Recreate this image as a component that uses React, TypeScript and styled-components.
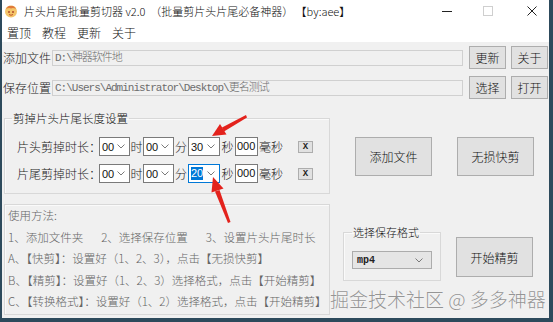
import { FC } from "react";
import styled, { createGlobalStyle } from "styled-components";

const FRAME = "#2d4a5c";

const GlobalStyle = createGlobalStyle`
  html, body { margin: 0; padding: 0; background: #f0f0f0; }
  body { font-family: "Noto Sans CJK SC", "Liberation Sans", sans-serif; font-weight: 300; }
`;

const Window = styled.div`
  position: relative;
  width: 553px;
  height: 322px;
  box-sizing: border-box;
  border-left: 2px solid ${FRAME};
  border-right: 4px solid ${FRAME};
  border-bottom: 4px solid ${FRAME};
  background: #f0f0f0;
  display: flex;
  flex-direction: column;
  overflow: hidden;
`;

const TitleBar = styled.div`
  height: 21px;
  background: #fff;
  display: flex;
  align-items: center;
  padding-left: 2px;
`;

const Title = styled.span`
  margin-left: 6px;
  font-size: 11px;
  color: #111;
  white-space: pre;
  flex: 1;
`;

const Controls = styled.div`
  display: flex;
  align-items: center;
  margin-right: 12px;
`;

const Ctl = styled.div<{ $gap: number }>`
  width: 10px;
  height: 10px;
  margin-left: ${p => p.$gap}px;
  display: flex;
  align-items: center;
  justify-content: center;
`;

const MenuBar = styled.div`
  height: 21px;
  background: #fff;
  display: flex;
  align-items: center;
  gap: 11px;
  padding-left: 5px;
  padding-top: 1px;
  box-sizing: border-box;
  font-size: 12px;
  color: #111;
`;

const Body = styled.div`
  flex: 1;
  padding: 4px 1px 0 1px;
  display: flex;
  flex-direction: column;
`;

const PathRow = styled.div<{ $top: number }>`
  display: flex;
  align-items: center;
  height: 23px;
  margin-top: ${p => p.$top}px;
`;

const Label = styled.span`
  width: 49px;
  font-size: 12px;
  color: #1a1a1a;
  white-space: nowrap;
`;

const PathInput = styled.div`
  width: 411px;
  height: 16px;
  box-sizing: border-box;
  border: 1px solid #d0d0d0;
  background: #f0f0f0;
  margin-right: 6px;
  padding: 0 2px;
  font-family: "Liberation Mono", "Noto Sans CJK SC", monospace;
  font-size: 11px;
  letter-spacing: -1px;
  line-height: 14px;
  color: #6d6d6d;
  white-space: nowrap;
  overflow: hidden;
`;

const Button = styled.div<{ $w: number; $h: number; $left?: number; $top?: number }>`
  width: ${p => p.$w}px;
  height: ${p => p.$h}px;
  margin-left: ${p => p.$left ?? 0}px;
  margin-top: ${p => p.$top ?? 0}px;
  box-sizing: border-box;
  border: 1px solid #adadad;
  background: #e1e1e1;
  display: flex;
  align-items: center;
  justify-content: center;
  font-size: 12px;
  color: #111;
  flex-shrink: 0;
`;

const Section = styled.div<{ $top: number }>`
  display: flex;
  align-items: flex-start;
  margin-top: ${p => p.$top}px;
`;

const Group = styled.fieldset<{ $w: number; $left: number; $top?: number; $pad: string }>`
  width: ${p => p.$w}px;
  margin: ${p => p.$top ?? 0}px 0 0 ${p => p.$left}px;
  box-sizing: border-box;
  border: 1px solid #d8d8d8;
  box-shadow: inset 1px 1px 0 #fafafa;
  padding: ${p => p.$pad};
  min-width: 0;
`;

const Legend = styled.legend<{ $size: number; $shift?: number }>`
  font-size: ${p => p.$size}px;
  line-height: 16px;
  padding: 0 1px;
  margin-left: ${p => p.$shift ?? 0}px;
  color: #111;
`;

const TimeRow = styled.div<{ $top: number }>`
  display: flex;
  align-items: center;
  height: 19px;
  margin-top: ${p => p.$top}px;
`;

const RowLabel = styled.span`
  width: 82px;
  font-size: 12px;
  color: #1a1a1a;
  white-space: nowrap;
`;

const Combo = styled.div<{ $w: number; $active?: boolean }>`
  width: ${p => p.$w}px;
  height: 19px;
  box-sizing: border-box;
  border: 1px solid ${p => (p.$active ? "#0078d7" : "#7a7a7a")};
  background: #fff;
  display: flex;
  align-items: center;
  justify-content: space-between;
  padding: 0 4px 0 2px;
  font-family: "Liberation Sans", sans-serif;
  font-weight: 400;
  font-size: 11px;
  color: #111;
`;

const Picked = styled.span`
  background: #0078d7;
  color: #fff;
  line-height: 13px;
`;

const Unit = styled.span<{ $w: number }>`
  width: ${p => p.$w}px;
  text-align: center;
  font-size: 12px;
  color: #1a1a1a;
`;

const MsInput = styled.div`
  width: 23px;
  height: 19px;
  box-sizing: border-box;
  border: 1px solid #7a7a7a;
  background: #fff;
  padding-left: 1px;
  font-family: "Liberation Sans", sans-serif;
  font-weight: 400;
  font-size: 11px;
  line-height: 17px;
  color: #111;
`;

const ClearBtn = styled.div`
  width: 15px;
  height: 12px;
  margin-left: 14px;
  box-sizing: border-box;
  border: 1px solid #adadad;
  background: #e1e1e1;
  font-family: "Liberation Mono", monospace;
  font-weight: bold;
  font-size: 9px;
  line-height: 10px;
  text-align: center;
  color: #222;
`;

const Usage = styled.div`
  width: 326px;
  height: 111px;
  margin-left: 1px;
  box-sizing: border-box;
  border: 1px solid #d8d8d8;
  box-shadow: inset 1px 1px 0 #fafafa;
  padding: 0 3px;
  font-size: 11.5px;
  line-height: 21.5px;
  color: #666;
  white-space: nowrap;
  overflow: hidden;
`;

const Steps = styled.div`
  display: flex;
  gap: 18px;
`;

const Select = styled.div`
  width: 80px;
  height: 18px;
  margin-top: 11px;
  box-sizing: border-box;
  border: 1px solid #acacac;
  background: #e5e5e5;
  display: flex;
  align-items: center;
  justify-content: space-between;
  padding: 0 8px 0 4px;
  font-family: "Liberation Mono", monospace;
  font-size: 10px;
  font-weight: bold;
  color: #222;
`;

const Watermark = styled.div`
  position: absolute;
  left: 328px;
  top: 288px;
  font-size: 19px;
  line-height: 22px;
  color: #959595;
  text-shadow: 0 0 1px #fff;
  white-space: pre;
`;

const Overlay = styled.svg`
  position: absolute;
  left: -2px;
  top: 0;
  pointer-events: none;
`;

const Chevron: FC = () => (
  <svg width="8" height="5" viewBox="0 0 8 5">
    <path d="M0.5 0.5 L4 4 L7.5 0.5" fill="none" stroke="#7a7a7a" strokeWidth="1" />
  </svg>
);

const AppIcon: FC = () => (
  <svg width="14" height="14" viewBox="0 0 14 14">
    <circle cx="7" cy="7.5" r="6" fill="#f4c56a" />
    <path d="M2 5 Q4 1 7 2 Q10 1 12 5 Q9 3.5 7 4.5 Q5 3.5 2 5Z" fill="#e07a3a" />
    <circle cx="5" cy="8" r="1" fill="#b04a2a" />
    <circle cx="9" cy="8" r="1" fill="#b04a2a" />
    <path d="M5 10.5 Q7 12 9 10.5" fill="none" stroke="#c0522a" strokeWidth="1" />
  </svg>
);

const TimeCombo: FC<{ value: string; w?: number; active?: boolean }> = ({ value, w = 31, active }) => (
  <Combo $w={w} $active={active}>
    {active ? <Picked>{value}</Picked> : <span>{value}</span>}
    <Chevron />
  </Combo>
);

const TimeLine: FC<{ label: string; top: number; active?: boolean }> = ({ label, top, active }) => (
  <TimeRow $top={top}>
    <RowLabel>{label}</RowLabel>
    <TimeCombo value="00" />
    <Unit $w={13}>时</Unit>
    <TimeCombo value="00" />
    <Unit $w={14}>分</Unit>
    <TimeCombo value={active ? "20" : "30"} w={32} active={active} />
    <Unit $w={15}>秒</Unit>
    <MsInput>000</MsInput>
    <Unit $w={26}>毫秒</Unit>
    <ClearBtn>X</ClearBtn>
  </TimeRow>
);

const Arrow: FC<{ shaft: string; head: string }> = ({ shaft, head }) => (
  <g fill="#e3221c" stroke="none">
    <polygon points={shaft} />
    <polygon points={head} />
  </g>
);

const App: FC = () => {
  return (
    <Window>
      <GlobalStyle />
      <TitleBar>
        <AppIcon />
        <Title>片头片尾批量剪切器 v2.0  （批量剪片头片尾必备神器） 【by:aee】</Title>
        <Controls>
          <Ctl $gap={0}>
            <svg width="10" height="10"><path d="M0 5.5 H10" stroke="#222" strokeWidth="1" /></svg>
          </Ctl>
          <Ctl $gap={31}>
            <svg width="10" height="10"><rect x="0.5" y="0.5" width="9" height="9" fill="none" stroke="#cfcfcf" /></svg>
          </Ctl>
          <Ctl $gap={34}>
            <svg width="10" height="10"><path d="M0.5 0.5 L9.5 9.5 M9.5 0.5 L0.5 9.5" stroke="#222" strokeWidth="1" /></svg>
          </Ctl>
        </Controls>
      </TitleBar>

      <MenuBar>
        <span>置顶</span>
        <span>教程</span>
        <span>更新</span>
        <span>关于</span>
      </MenuBar>

      <Body>
        <PathRow $top={0}>
          <Label>添加文件</Label>
          <PathInput>D:\神器软件地</PathInput>
          <Button $w={37} $h={23}>更新</Button>
          <Button $w={37} $h={23} $left={5}>关于</Button>
        </PathRow>
        <PathRow $top={7}>
          <Label>保存位置</Label>
          <PathInput>C:\Users\Administrator\Desktop\更名测试</PathInput>
          <Button $w={37} $h={23}>选择</Button>
          <Button $w={37} $h={23} $left={5}>打开</Button>
        </PathRow>

        <Section $top={11}>
          <Group $w={326} $left={1} $pad="0 0 10px 12px">
            <Legend $size={11.5} $shift={-5}>剪掉片头片尾长度设置</Legend>
            <TimeLine label="片头剪掉时长：" top={11} />
            <TimeLine label="片尾剪掉时长：" top={8} active />
          </Group>
          <Button $w={77} $h={39} $left={25} $top={27}>添加文件</Button>
          <Button $w={77} $h={39} $left={25} $top={27}>无损快剪</Button>
        </Section>

        <Section $top={10}>
          <Usage>
            <div>使用方法:</div>
            <Steps>
              <span>1、添加文件夹</span>
              <span>2、选择保存位置</span>
              <span>3、设置片头片尾时长</span>
            </Steps>
            <div>A、【快剪】：设置好（1、2、3），点击【无损快剪】</div>
            <div>B、【精剪】：设置好（1、2、3）选择格式，点击【开始精剪】</div>
            <div>C、【转换格式】：设置好（1、2）选择格式，点击【开始精剪】</div>
          </Usage>
          <Group $w={98} $left={13} $top={20} $pad="0 8px 11px 8px">
            <Legend $size={11}>选择保存格式</Legend>
            <Select>
              <span>mp4</span>
              <Chevron />
            </Select>
          </Group>
          <Button $w={77} $h={40} $left={15} $top={33}>开始精剪</Button>
        </Section>
      </Body>

      <Watermark>掘金技术社区 @ 多多神器</Watermark>

      <Overlay width="553" height="322" viewBox="0 0 553 322">
        <Arrow shaft="246,115 247,117.5 224,131.5 222,127.5" head="212,136 226.5,134.5 220,124" />
        <Arrow shaft="228,223 230.5,222 219.5,190 215,191.5" head="213,177 223.5,188.5 211.5,192.5" />
      </Overlay>
    </Window>
  );
};

export default App;
